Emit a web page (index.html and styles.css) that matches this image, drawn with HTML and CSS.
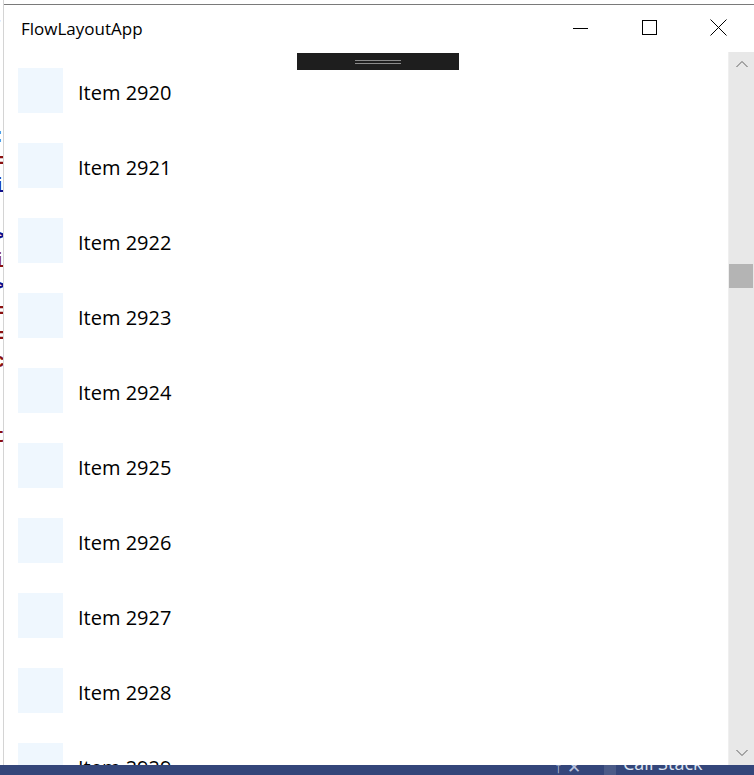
FILE: index.html
```html
<!DOCTYPE html>
<html>
<head>
<meta charset="utf-8">
<title>FlowLayoutApp</title>
<link rel="stylesheet" href="styles.css">
</head>
<body>
<div class="desktop">
  <div class="main">
    <div class="code-strip">
      <div class="code-line first"><span class="red">,</span></div>
      <div class="code-line"><span class="blue">:</span></div>
      <div class="code-line"><span class="red">=</span></div>
      <div class="code-line"><span class="blue">i</span></div>
      <div class="code-line"></div>
      <div class="code-line"><span class="blue">&gt;</span></div>
      <div class="code-line"><span class="red">i</span></div>
      <div class="code-line"><span class="blue">&gt;</span></div>
      <div class="code-line"><span class="red">=</span></div>
      <div class="code-line"><span class="red">=</span></div>
      <div class="code-line"><span class="red">c</span></div>
      <div class="code-line"></div>
      <div class="code-line"></div>
      <div class="code-line"><span class="red">t</span></div>
    </div>
    <div class="window">
      <div class="titlebar">
        <div class="title">FlowLayoutApp</div>
        <div class="controls">
          <div class="ctrl"><svg width="16" height="16" viewBox="0 0 16 16"><line x1="0" y1="8.5" x2="15" y2="8.5" stroke="#000" stroke-width="1"/></svg></div>
          <div class="ctrl"><svg width="16" height="16" viewBox="0 0 16 16"><rect x="0.5" y="0.5" width="14" height="14" fill="none" stroke="#000" stroke-width="1"/></svg></div>
          <div class="ctrl"><svg width="17" height="17" viewBox="0 0 17 17"><path d="M0.5 0.5 L16.5 16.5 M16.5 0.5 L0.5 16.5" stroke="#000" stroke-width="1"/></svg></div>
        </div>
      </div>
      <div class="content">
        <div class="list">
          <div class="item"><div class="swatch"></div><span class="label">Item 2920</span></div>
          <div class="item"><div class="swatch"></div><span class="label">Item 2921</span></div>
          <div class="item"><div class="swatch"></div><span class="label">Item 2922</span></div>
          <div class="item"><div class="swatch"></div><span class="label">Item 2923</span></div>
          <div class="item"><div class="swatch"></div><span class="label">Item 2924</span></div>
          <div class="item"><div class="swatch"></div><span class="label">Item 2925</span></div>
          <div class="item"><div class="swatch"></div><span class="label">Item 2926</span></div>
          <div class="item"><div class="swatch"></div><span class="label">Item 2927</span></div>
          <div class="item"><div class="swatch"></div><span class="label">Item 2928</span></div>
          <div class="item"><div class="swatch"></div><span class="label">Item 2929</span></div>
        </div>
        <div class="scrollbar">
          <div class="sb-btn"><svg width="12" height="8" viewBox="0 0 12 8"><path d="M0.5 7 L6 1.5 L11.5 7" fill="none" stroke="#606060" stroke-width="1"/></svg></div>
          <div class="sb-track"><div class="sb-thumb"></div></div>
          <div class="sb-btn"><svg width="12" height="8" viewBox="0 0 12 8"><path d="M0.5 1 L6 6.5 L11.5 1" fill="none" stroke="#606060" stroke-width="1"/></svg></div>
        </div>
        <div class="drag-handle"><div class="grip"></div></div>
      </div>
    </div>
  </div>
  <div class="taskbar">
    <span class="tb-glyphs">↑ ✕</span>
    <span class="tb-block"></span>
    <span class="tb-text">Call Stack</span>
  </div>
</div>
</body>
</html>
```

FILE: styles.css
```css
* { box-sizing: border-box; }
html, body { margin: 0; padding: 0; }
body {
  width: 754px;
  height: 775px;
  overflow: hidden;
  background: #ffffff;
  font-family: "Open Sans", "Noto Sans", sans-serif;
}
.desktop {
  display: flex;
  flex-direction: column;
  height: 775px;
}
.main {
  display: flex;
  flex: 1;
  min-height: 0;
}
.code-strip {
  width: 4px;
  flex: none;
  overflow: hidden;
  background: #ffffff;
  border-right: 1px solid #d4d4d4;
  font-family: "Liberation Mono", monospace;
  font-weight: bold;
  font-size: 20px;
}
.code-line {
  height: 25px;
  line-height: 25px;
  white-space: nowrap;
  margin-left: -7px;
}
.code-line.first { margin-bottom: 94px; line-height: 36px; height: 30px; }
.red { color: #8b1010; }
.blue { color: #10108b; }
.window {
  flex: 1;
  margin-top: 4px;
  display: flex;
  flex-direction: column;
  background: #ffffff;
  border-top: 1px solid #7a7a7a;
  min-width: 0;
}
.titlebar {
  height: 47px;
  flex: none;
  display: flex;
  align-items: center;
  justify-content: space-between;
}
.title {
  padding-left: 17px;
  font-family: "Open Sans", sans-serif;
  font-size: 17px;
  color: #000;
}
.controls { display: flex; padding-right: 1px; }
.ctrl {
  width: 69px;
  height: 47px;
  display: flex;
  align-items: center;
  justify-content: center;
  padding-bottom: 2px;
}
.content {
  flex: 1;
  position: relative;
  display: flex;
  min-height: 0;
  overflow: hidden;
}
.list {
  flex: 1;
  display: flex;
  flex-direction: column;
  gap: 30px;
  padding: 16px 0 0 14px;
  overflow: hidden;
}
.item {
  display: flex;
  align-items: center;
  gap: 15px;
  height: 45px;
  flex: none;
}
.swatch {
  width: 45px;
  height: 45px;
  background: #eff7fe;
}
.label {
  font-size: 20px;
  color: #000;
  padding-top: 4px;
}
.scrollbar {
  width: 26px;
  flex: none;
  background: #e8e8e8;
  border-left: 1px solid #efefef;
  display: flex;
  flex-direction: column;
}
.sb-btn {
  height: 24px;
  display: flex;
  align-items: center;
  justify-content: center;
}
.sb-track {
  flex: 1;
  padding-top: 188px;
}
.sb-thumb {
  width: 24px;
  height: 24px;
  background: #b4b4b4;
}
.drag-handle {
  position: absolute;
  left: 293px;
  top: 1px;
  width: 162px;
  height: 17px;
  background: #1e1e1e;
  display: flex;
  align-items: center;
  justify-content: center;
}
.grip {
  width: 46px;
  height: 4px;
  border-top: 1px solid #8a8a8a;
  border-bottom: 1px solid #8a8a8a;
}
.taskbar {
  height: 10px;
  flex: none;
  background: #34467a;
  overflow: hidden;
  position: relative;
}
.tb-glyphs {
  position: absolute;
  left: 554px;
  top: -10px;
  color: #b8c2de;
  font-size: 17px;
  font-family: "Noto Sans", sans-serif;
}
.tb-block {
  position: absolute;
  left: 604px;
  top: 0;
  width: 12px;
  height: 10px;
  background: #4b5b88;
}
.tb-text {
  position: absolute;
  left: 623px;
  top: -14px;
  color: #dde3f2;
  font-size: 18px;
  font-family: "Open Sans", sans-serif;
}
```
